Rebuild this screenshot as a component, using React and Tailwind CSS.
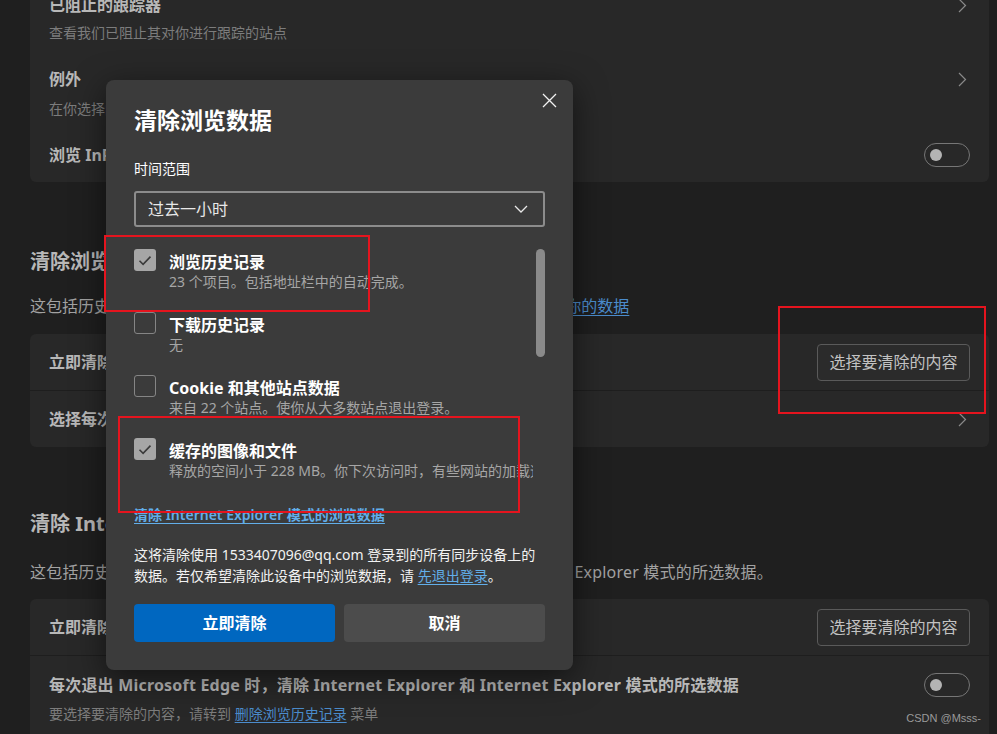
import React from 'react';

const FONT = "font-['Noto_Sans','Noto_Sans_CJK_SC',sans-serif]";

function Chevron() {
  return (
    <div className="w-[16px] flex justify-center shrink-0">
      <svg width="9" height="15" viewBox="0 0 9 15" fill="none">
        <path d="M1 1l6.5 6.5L1 14" stroke="#8a8a8a" strokeWidth="1.2" />
      </svg>
    </div>
  );
}

function Toggle() {
  return (
    <div className="w-[46px] h-[24px] rounded-full border border-[#767676] flex items-center pl-[5px] shrink-0">
      <div className="w-[12px] h-[12px] rounded-full bg-[#b4b4b4]" />
    </div>
  );
}

function GhostButton({ children }) {
  return (
    <div className="w-[153px] h-[37px] flex items-center justify-center rounded-[4px] border border-[#5a5a5a] bg-[#2b2b2b] text-[16px] text-[#c2c2c2] shrink-0">
      {children}
    </div>
  );
}

function Check({ checked }) {
  if (!checked) {
    return <div className="w-[22px] h-[22px] rounded-[3px] border border-[#858585] shrink-0" />;
  }
  return (
    <div className="w-[22px] h-[22px] rounded-[3px] bg-[#a6a6a6] flex items-center justify-center shrink-0">
      <svg width="14" height="11" viewBox="0 0 14 11" fill="none">
        <path d="M1.5 5.8l3.6 3.6L12.5 1.6" stroke="#3a3a3a" strokeWidth="1.6" />
      </svg>
    </div>
  );
}

const items = [
  { checked: true, title: '浏览历史记录', sub: '23 个项目。包括地址栏中的自动完成。' },
  { checked: false, title: '下载历史记录', sub: '无' },
  { checked: false, title: 'Cookie 和其他站点数据', sub: '来自 22 个站点。使你从大多数站点退出登录。' },
  { checked: true, title: '缓存的图像和文件', sub: '释放的空间小于 228 MB。你下次访问时，有些网站的加载速度可能会更慢。' },
  { checked: false, title: '密码', sub: '无' },
];

function ClearDialog() {
  return (
    <div className="absolute left-[106px] top-[80px] w-[467px] h-[590px] rounded-[8px] bg-[#3b3b3b] shadow-[0_8px_32px_rgba(0,0,0,0.55)] px-[28px] flex flex-col">
      {/* close */}
      <div className="absolute right-[16px] top-[13px]">
        <svg width="15" height="15" viewBox="0 0 15 15" fill="none">
          <path d="M1 1l13 13M14 1L1 14" stroke="#f2f2f2" strokeWidth="1.3" />
        </svg>
      </div>

      <h2 className="pt-[25px] text-[23px] font-bold leading-[30px] text-white">清除浏览数据</h2>

      <div className="mt-[24px] text-[14px] leading-[20px] text-white">时间范围</div>

      <div className="mt-[12px] h-[36px] border-2 border-[#8c8c8c] rounded-[3px] flex items-center justify-between pl-[12px] pr-[15px]">
        <span className="text-[16px] text-[#e8e8e8]">过去一小时</span>
        <svg width="14" height="8" viewBox="0 0 14 8" fill="none">
          <path d="M1 1l6 6 6-6" stroke="#e8e8e8" strokeWidth="1.3" />
        </svg>
      </div>

      {/* scrolling list */}
      <div className="relative mt-[22px] h-[251px] overflow-hidden">
        <div className="pr-[12px]">
          {items.map((it) => (
            <div key={it.title} className="h-[63px] flex items-start gap-[13px]">
              <Check checked={it.checked} />
              <div className="min-w-0 flex-1 overflow-hidden pt-[2px]">
                <div className="text-[16px] leading-[22px] font-bold text-white whitespace-nowrap">{it.title}</div>
                <div className="text-[14px] leading-[18px] text-[#a6a6a6] whitespace-nowrap">{it.sub}</div>
              </div>
            </div>
          ))}
        </div>
        <div className="absolute right-0 top-0 w-[9px] h-[108px] rounded-full bg-[#8a8a8a]" />
      </div>

      <div className="mt-[5px] text-[14px] leading-[20px] font-semibold text-[#62aee9] underline underline-offset-[3px]">
        清除 Internet Explorer 模式的浏览数据
      </div>

      <p className="mt-[19px] text-[14px] leading-[21px] text-[#f2f2f2]">
        这将清除使用 1533407096@qq.com 登录到的所有同步设备上的
        <br />
        数据。若仅希望清除此设备中的浏览数据，请{' '}
        <span className="text-[#62aee9] underline underline-offset-[3px]">先退出登录</span>。
      </p>

      <div className="mt-[18px] flex gap-[9px] h-[38px]">
        <button className="flex-1 rounded-[4px] bg-[#0067c0] text-white text-[16px] font-bold">立即清除</button>
        <button className="flex-1 rounded-[4px] bg-[#4c4c4c] text-white text-[16px] font-bold">取消</button>
      </div>
    </div>
  );
}

export default function App() {
  return (
    <div className={`relative h-[734px] w-full overflow-hidden bg-[#1f1f1f] ${FONT}`}>
      <div className="pl-[30px] pr-[8px]">
        {/* tracking card */}
        <div className="mt-[-30px] pt-[24px] pb-[16px] rounded-[6px] bg-[#282828] pl-[19px] pr-[19px]">
          <div className="h-[22px] flex items-center justify-between">
            <span className="text-[16px] font-bold text-[#b8b8b8]">已阻止的跟踪器</span>
            <Chevron />
          </div>
          <div className="mt-[8px] text-[14px] leading-[18px] text-[#7c7c7c]">查看我们已阻止其对你进行跟踪的站点</div>

          <div className="mt-[26px] h-[22px] flex items-center justify-between">
            <span className="text-[16px] font-bold text-[#b8b8b8]">例外</span>
            <Chevron />
          </div>
          <div className="mt-[10px] text-[14px] leading-[18px] text-[#7c7c7c]">在你选择的站点上允许所有跟踪器</div>

          <div className="mt-[26px] h-[22px] flex items-center justify-between">
            <span className="text-[16px] font-bold text-[#b8b8b8]">浏览 InPrivate 时始终使用“严格”跟踪防护</span>
            <Toggle />
          </div>
        </div>

        {/* clear browsing data */}
        <h2 className="mt-[66px] text-[20px] leading-[28px] font-bold text-[#b8b8b8]">清除浏览数据</h2>
        <p className="mt-[19px] text-[16px] leading-[22px] text-[#a2a2a2]">
          这包括历史记录、密码、Cookie 等。将仅删除此用户配置文件的数据。
          <span className="text-[#4b8ccc] underline underline-offset-[3px]">管理你的数据</span>
        </p>

        <div className="mt-[17px] rounded-[6px] bg-[#282828]">
          <div className="h-[56px] flex items-center justify-between px-[19px]">
            <span className="text-[16px] font-bold text-[#b8b8b8]">立即清除浏览数据</span>
            <GhostButton>选择要清除的内容</GhostButton>
          </div>
          <div className="h-[57px] flex items-center justify-between px-[19px] border-t border-[#1e1e1e]">
            <span className="text-[16px] font-bold text-[#b8b8b8]">选择每次关闭浏览器时要清除的内容</span>
            <Chevron />
          </div>
        </div>

        {/* clear IE data */}
        <h2 className="mt-[63px] text-[20px] leading-[28px] font-bold text-[#b8b8b8]">清除 Internet Explorer 浏览数据</h2>
        <p className="mt-[23px] text-[16px] leading-[22px] text-[#a2a2a2] tracking-[0.2px]">
          这包括历史记录、密码、Cookie 等。将清除 Internet Explorer 和 Internet Explorer 模式的所选数据。
        </p>

        <div className="mt-[16px] rounded-[6px] bg-[#282828] pb-[20px]">
          <div className="h-[56px] flex items-center justify-between px-[19px]">
            <span className="text-[16px] font-bold text-[#b8b8b8]">立即清除 Internet Explorer 浏览数据</span>
            <GhostButton>选择要清除的内容</GhostButton>
          </div>
          <div className="border-t border-[#1e1e1e] px-[19px] pt-[17px]">
            <div className="h-[24px] flex items-center justify-between">
              <span className="text-[16px] font-bold text-[#b8b8b8] tracking-[0.2px]">
                每次退出 Microsoft Edge 时，清除 Internet Explorer 和 Internet Explorer 模式的所选数据
              </span>
              <Toggle />
            </div>
            <div className="mt-[8px] text-[14px] leading-[18px] text-[#7c7c7c]">
              要选择要清除的内容，请转到{' '}
              <span className="text-[#4b8ccc] underline underline-offset-[3px]">删除浏览历史记录</span> 菜单
            </div>
          </div>
        </div>
      </div>

      <ClearDialog />

      {/* annotation boxes */}
      <div className="absolute left-[104px] top-[235px] w-[266px] h-[77px] border-2 border-[#e5141e]" />
      <div className="absolute left-[118px] top-[416px] w-[402px] h-[97px] border-2 border-[#e5141e]" />
      <div className="absolute left-[778px] top-[306px] w-[208px] h-[108px] border-2 border-[#e5141e]" />

      <div className="absolute right-[16px] bottom-[8px] text-[11px] text-[#9a9a9a] font-['Liberation_Sans',sans-serif]">
        CSDN @Msss-
      </div>
    </div>
  );
}
